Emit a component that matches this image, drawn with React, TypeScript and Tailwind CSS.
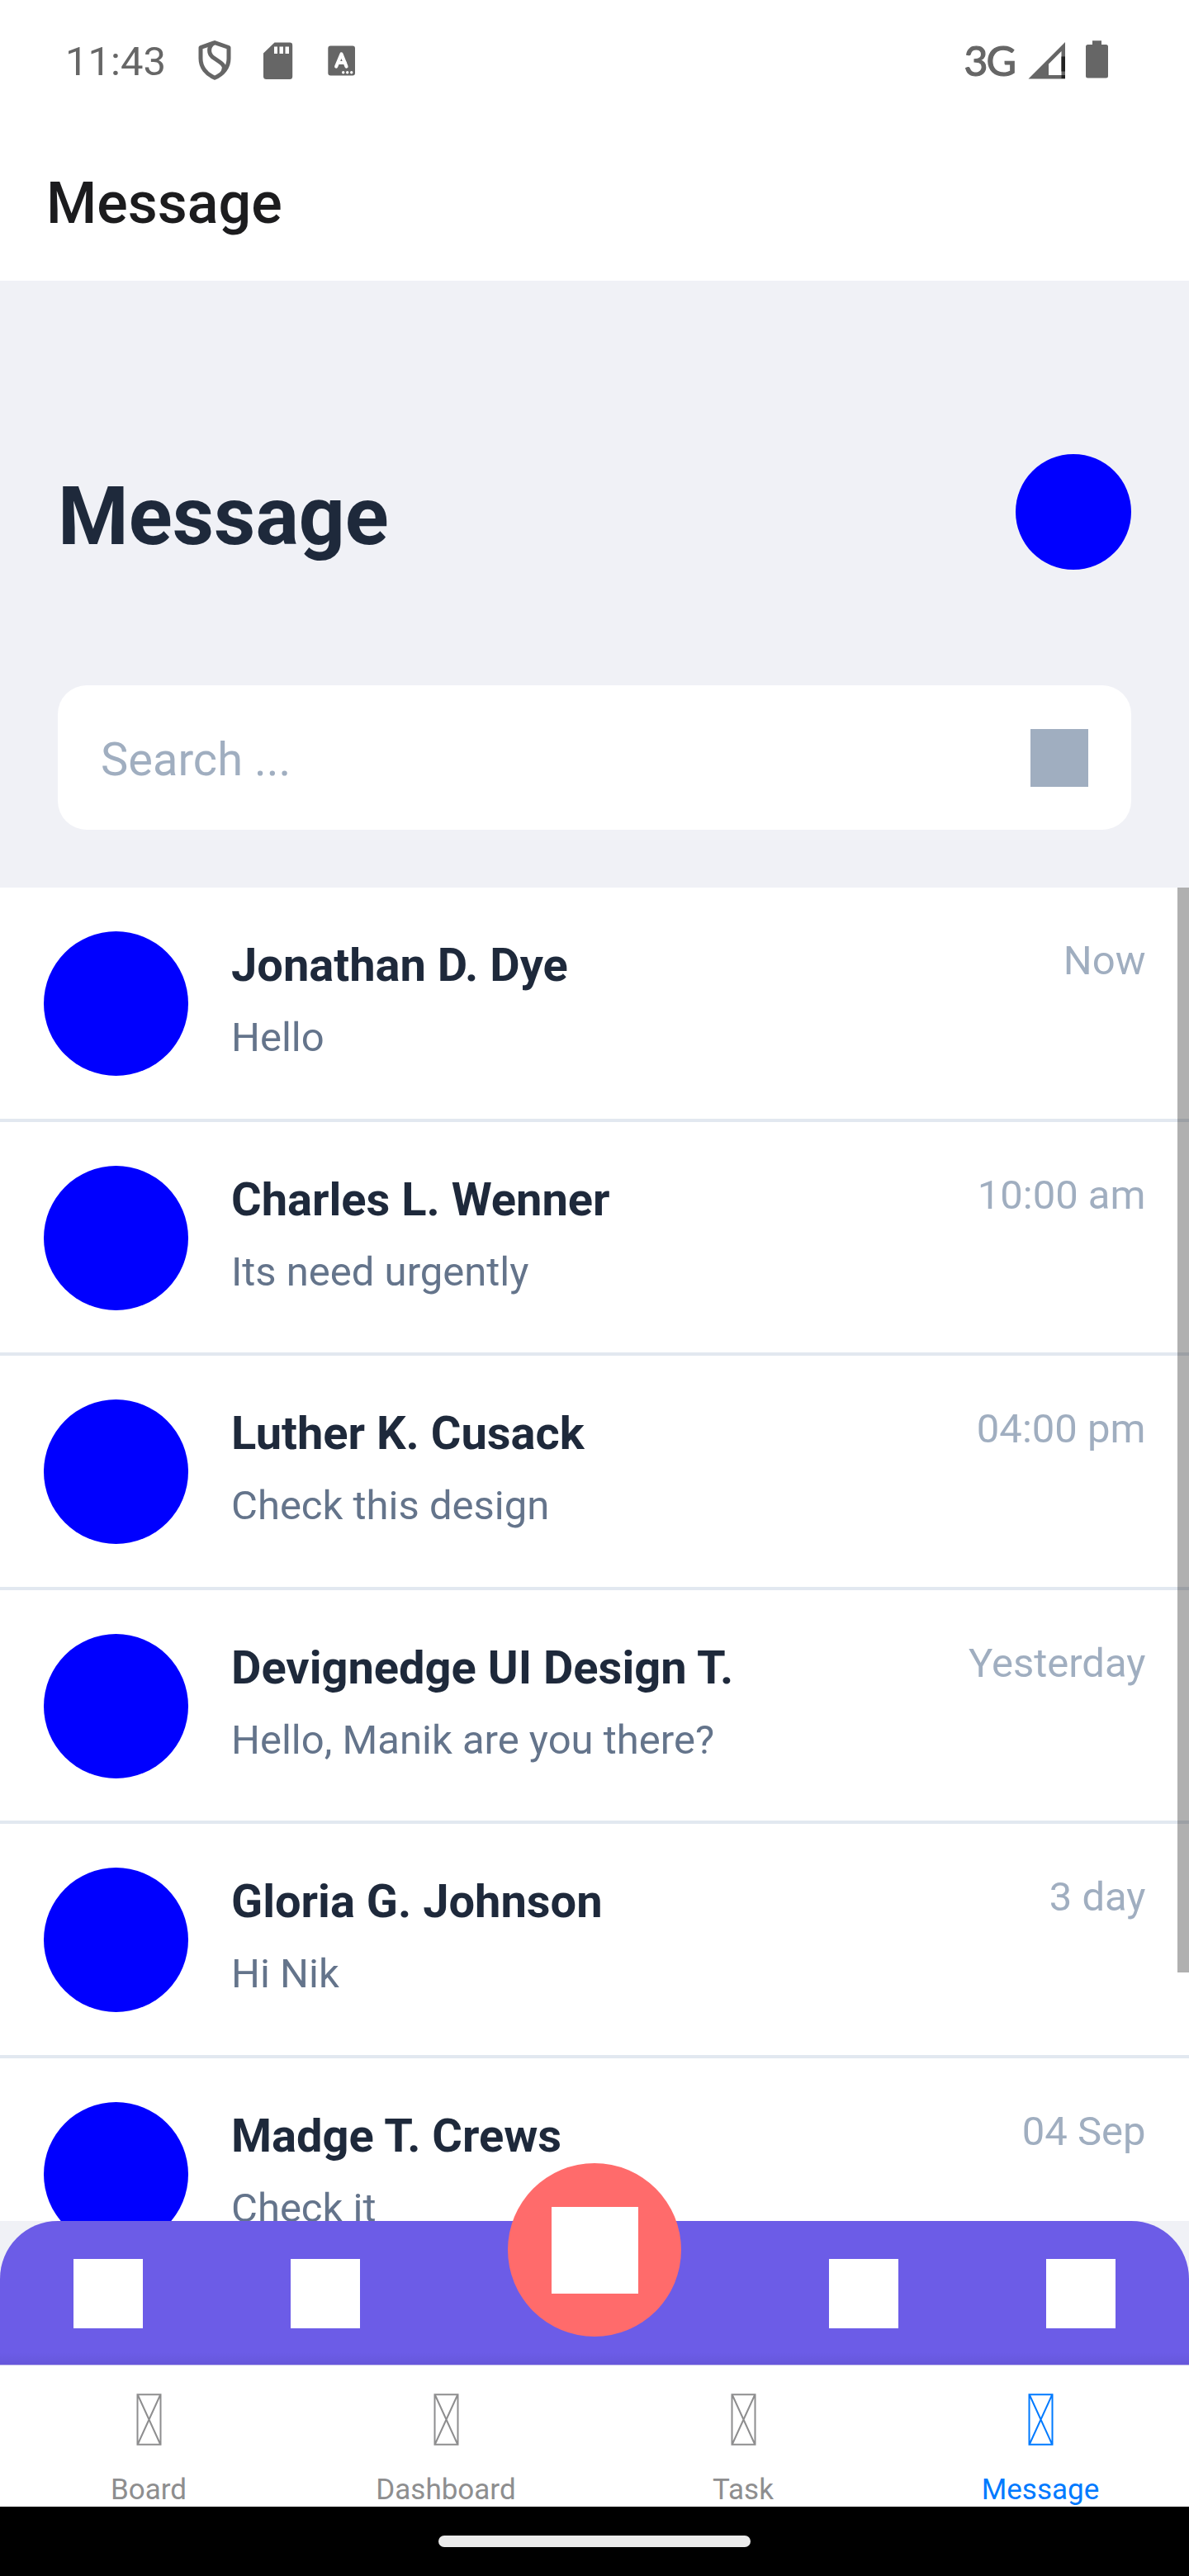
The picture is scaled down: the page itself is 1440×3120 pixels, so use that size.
const messages = [
  { name: "Jonathan D. Dye", text: "Hello", time: "Now" },
  { name: "Charles L. Wenner", text: "Its need urgently", time: "10:00 am" },
  { name: "Luther K. Cusack", text: "Check this design", time: "04:00 pm" },
  { name: "Devignedge UI Design T.", text: "Hello, Manik are you there?", time: "Yesterday" },
  { name: "Gloria G. Johnson", text: "Hi Nik", time: "3 day" },
  { name: "Madge T. Crews", text: "Check it", time: "04 Sep" },
];

const tabs = [
  { label: "Board", active: false },
  { label: "Dashboard", active: false },
  { label: "Task", active: false },
  { label: "Message", active: true },
];

function ShieldIcon() {
  return (
    <svg className="ml-[40px] h-[50px] w-[42px]" viewBox="0 0 42 50" fill="none" stroke="#666" strokeWidth="5">
      <path d="M21 3.6 L38 9.5 V23 C38 33.5 31 42 21 46.2 C11 42 4 33.5 4 23 V9.5 Z" strokeLinejoin="round" />
      <path d="M20 4 C13 8 13 17 19 21.500 L27 27 C33 31 33.500 34 30.500 40" />
    </svg>
  );
}

function SdIcon() {
  return (
    <svg className="ml-[38px] h-[45px] w-[36px]" viewBox="0 0 36 45">
      <path fill="#666" d="M13.500 .5 H32 Q35.200 .5 35.200 3.700 V41.500 Q35.200 45 32 45 H3.500 Q0 45 0 41.500 V13.500 Z" />
      <path fill="#fff" d="M13 5.500h4v8.500h-4zM19.500 5.500h4.500v8.500h-4.500zM26.500 5.500h4.500v8.500H26.500z" />
    </svg>
  );
}

function KeyboardIcon() {
  return (
    <svg className="ml-[42px] h-[37px] w-[34px]" viewBox="0 0 34 37">
      <rect x=".3" y=".5" width="32.700" height="36" rx="3" fill="#666" />
      <path d="M10.200 25.500 L16.500 10.500 L22.500 25.500 M12.500 21 H21" fill="none" stroke="#fff" strokeWidth="4.200" strokeLinecap="round" strokeLinejoin="round" />
      <g fill="#fff">
        <circle cx="18.700" cy="32.800" r="1.700" />
        <circle cx="23.700" cy="32.800" r="1.700" />
        <circle cx="28.700" cy="32.800" r="1.700" />
      </g>
    </svg>
  );
}

function SignalIcon() {
  return (
    <svg className="ml-[16px] h-[45px] w-[46px]" viewBox="0 0 46 45">
      <path fill="#666" fillRule="evenodd" d="M45 0 V44.500 H.5 Z M40.500 11 L25 26.500 V40 H40.500 Z" />
      <path fill="#222" d="M40.500 17.500 H45 V35.500 H40.500 Z M40.500 40 H45 V44 H40.500 Z" />
    </svg>
  );
}

function BatteryIcon() {
  return (
    <svg className="mb-[2px] ml-[24px] h-[46px] w-[28px]" viewBox="0 0 28 46">
      <path fill="#666" d="M8 .3 H19 V5 H24.500 Q27 5 27 7.500 V43 Q27 45.500 24.500 45.500 H2.500 Q0 45.500 0 43 V7.500 Q0 5 2.500 5 H8 Z" />
    </svg>
  );
}

function MissingGlyph() {
  return (
    <svg className="h-[63px] w-[31px]" viewBox="0 0 31 63" fill="none" stroke="currentColor" strokeWidth="2">
      <path d="M1.500 1.300 H29.500 V61.700 H1.500 Z M1.800 1.500 L29.200 61.500 M29.200 1.500 L1.800 61.500" />
    </svg>
  );
}

export default function App() {
  return (
    <div className="flex h-[3120px] w-[1440px] flex-col overflow-hidden bg-[#f0f1f6] font-['Roboto',sans-serif]">
      <div className="flex h-[340px] shrink-0 flex-col bg-white">
        <div className="flex h-[146px] shrink-0 items-center justify-between pr-[97px] pl-[79px] text-[#666]">
          <div className="flex items-center">
            <span className="w-[120px] pt-[3px] text-[49px] leading-[58px] whitespace-nowrap">11:43</span>
            <ShieldIcon />
            <SdIcon />
            <KeyboardIcon />
          </div>
          <div className="flex items-center">
            <span className="font-['Lato',sans-serif] text-[50px] leading-[58px] tracking-[-2px] [-webkit-text-stroke:1.2px_#666]">
              3G
            </span>
            <SignalIcon />
            <BatteryIcon />
          </div>
        </div>
        <div className="flex h-[194px] items-center pt-[6px] pl-[56px]">
          <span className="text-[70px] leading-[82px] font-medium text-[#1c1c1e]">Message</span>
        </div>
      </div>

      <div className="flex h-[735px] shrink-0 flex-col px-[70px] pt-[210px]">
        <div className="flex h-[140px] items-center justify-between">
          <h1 className="pt-[12px] text-[98px] leading-[116px] font-bold text-[#1e293b]">Message</h1>
          <div className="size-[140px] rounded-full bg-[#0000ff]" />
        </div>
        <div className="mt-[140px] flex h-[175px] items-center justify-between rounded-[35px] bg-white px-[52px]">
          <span className="pt-[4px] text-[56px] leading-[66px] text-[#a0aec0]">Search ...</span>
          <div className="size-[70px] bg-[#a0aec0]" />
        </div>
      </div>

      <div className="relative h-[1615px] shrink-0 overflow-hidden bg-white">
        {messages.map((m) => (
          <div key={m.name} className="h-[283.5px]">
            <div className="flex h-[279.5px] px-[52.5px] pt-[53px]">
              <div className="size-[175px] shrink-0 rounded-full bg-[#0000ff]" />
              <div className="ml-[52.5px] flex flex-1 flex-col pt-[8px]">
                <span className="text-[56px] leading-[66px] font-bold text-[#1e293b]">{m.name}</span>
                <span className="mt-[26px] text-[49px] leading-[58px] text-[#64748b]">{m.text}</span>
              </div>
              <span className="pt-[7px] text-[49px] leading-[58px] text-[#a0aec0]">{m.time}</span>
            </div>
            <div className="h-[4px] bg-[#e2e8f0]" />
          </div>
        ))}
        <div className="absolute top-0 right-0 h-[1314px] w-[14px] bg-black/31" />
      </div>

      <div className="relative flex h-[175px] shrink-0 items-center justify-between rounded-t-[70px] bg-[#6c5ce7] px-[89px]">
        <div className="flex gap-[179px]">
          <div className="size-[84px] bg-white" />
          <div className="size-[84px] bg-white" />
        </div>
        <div className="flex gap-[179px]">
          <div className="size-[84px] bg-white" />
          <div className="size-[84px] bg-white" />
        </div>
        <div className="absolute inset-x-0 bottom-0 h-[16px] bg-linear-to-b from-black/0 to-black/6" />
        <div className="absolute -top-[70px] left-[615px] flex size-[210px] items-center justify-center rounded-full bg-[#ff6b6b]">
          <div className="size-[105px] bg-white" />
        </div>
      </div>

      <div className="relative -mt-px grid h-[172px] shrink-0 grid-cols-4 border-t border-[#c3bdec] bg-white">
        {tabs.map((t) => (
          <div
            key={t.label}
            className={
              t.active
                ? "flex flex-col items-center pt-[34px] text-[#007aff]"
                : "flex flex-col items-center pt-[34px] text-[#8e8e8f]"
            }
          >
            <MissingGlyph />
            <span className="mt-[33px] text-[35px] leading-[41px]">{t.label}</span>
          </div>
        ))}
      </div>

      <div className="flex h-[84px] shrink-0 items-center justify-center bg-black">
        <div className="h-[14px] w-[378px] rounded-full bg-[#ebebeb]" />
      </div>
    </div>
  );
}
